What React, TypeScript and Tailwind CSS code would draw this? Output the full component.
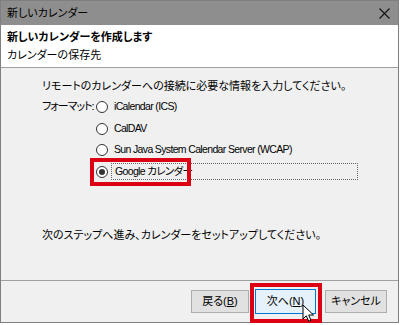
import React from "react";

const FONT = "font-['Liberation_Sans','Noto_Sans_CJK_JP',sans-serif] [font-feature-settings:'palt']";

const FORMATS = [
  { label: "iCalendar (ICS)", checked: false },
  { label: "CalDAV", checked: false },
  { label: "Sun Java System Calendar Server (WCAP)", checked: false },
  { label: "Google カレンダー", checked: true },
];

function Radio({ checked }: { checked: boolean }) {
  return (
    <span className="w-[12px] h-[12px] rounded-full border border-[#333] bg-white flex items-center justify-center shrink-0">
      {checked && <span className="w-[6px] h-[6px] rounded-full bg-[#333]" />}
    </span>
  );
}

function Cursor() {
  return (
    <svg width="13" height="19" viewBox="0 0 13 19" className="absolute left-[302px] top-[304px]">
      <path d="M1 1 L1 15 L4.3 11.8 L6.7 17.3 L9 16.3 L6.7 11 L11.5 11 Z" fill="white" stroke="black" strokeWidth="1" strokeLinejoin="round" />
    </svg>
  );
}

export default function App() {
  return (
    <div className={`relative w-[400px] h-[325px] overflow-hidden bg-white text-[11px] text-black ${FONT}`}>
      <div className="w-[399px] h-[323px] border border-[#7f7f7f] flex flex-col">
        {/* Title bar */}
        <div className="h-[24px] bg-[#8e8e8e] flex items-center justify-between pl-[6px] pr-[8px] shrink-0">
          <span>新しいカレンダー</span>
          <svg width="11" height="11" viewBox="0 0 11 11">
            <path d="M0.5 0.5 L10.5 10.5 M10.5 0.5 L0.5 10.5" stroke="#111" strokeWidth="1.1" />
          </svg>
        </div>

        {/* Header */}
        <div className="h-[43px] bg-white border-b border-[#a0a0a0] flex flex-col justify-center gap-[3px] pl-[6px] shrink-0">
          <span className="font-bold leading-[15px]">新しいカレンダーを作成します</span>
          <span className="leading-[15px]">カレンダーの保存先</span>
        </div>

        {/* Body */}
        <div className="flex-1 bg-[#f0f0f0] pl-[41px] pt-[10px] flex flex-col">
          <p className="leading-[16px]">リモートのカレンダーへの接続に必要な情報を入力してください。</p>
          <div className="flex mt-[2px]">
            <span className="w-[54px] whitespace-nowrap leading-[16px] pt-[2px] tracking-[-1px]">フォーマット:</span>
            <div className="flex flex-col gap-[5px] pt-[3px] text-[10.5px] tracking-[-0.65px]">
              {FORMATS.map((f) => (
                <div key={f.label} className="relative flex items-center gap-[6px] h-[16.5px]">
                  <Radio checked={f.checked} />
                  {f.checked ? (
                    <span className="h-[17px] w-[247px] border border-dotted border-[#666] flex items-center px-[3px] -ml-[3px]">
                      {f.label}
                    </span>
                  ) : (
                    <span>{f.label}</span>
                  )}
                  {f.checked && (
                    <span className="absolute -left-[6px] -top-[6px] w-[101px] h-[28px] border-[4px] border-[#dc0012]" />
                  )}
                </div>
              ))}
            </div>
          </div>
          <p className="mt-[47px] leading-[16px]">次のステップへ進み、カレンダーをセットアップしてください。</p>
        </div>

        {/* Footer */}
        <div className="h-[42px] bg-[#f0f0f0] border-t border-[#a0a0a0] flex items-center justify-end gap-[6px] pr-[11px] shrink-0">
          <button className="w-[58px] h-[23px] bg-[#e1e1e1] border border-[#adadad]">
            戻る(<span className="underline">B</span>)
          </button>
          <div className="relative">
            <button className="w-[61px] h-[25px] bg-[#e5f1fb] border border-[#0078d7]">
              次へ(<span className="underline">N</span>)
            </button>
            <span className="absolute -left-[5px] -top-[6px] w-[72px] h-[40px] border-[4px] border-[#dc0012]" />
          </div>
          <button className="w-[62px] h-[23px] bg-[#e1e1e1] border border-[#adadad] ml-[3px]">
            キャンセル
          </button>
        </div>
      </div>
      <Cursor />
    </div>
  );
}
